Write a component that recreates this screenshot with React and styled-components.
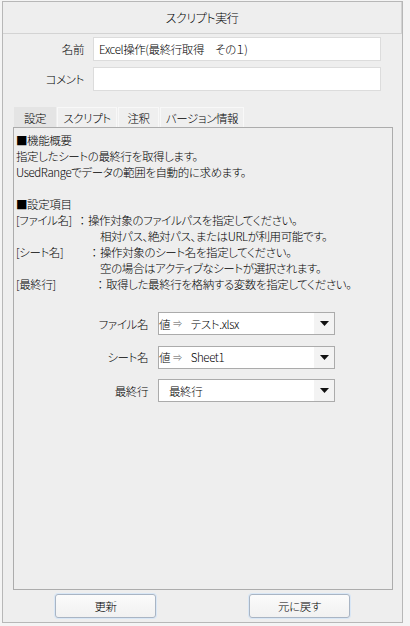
import React from "react";
import styled, { createGlobalStyle } from "styled-components";

const GlobalStyle = createGlobalStyle`
  html, body { margin: 0; padding: 0; background: #f4f4f4; }
  body {
    font-family: "Noto Sans CJK JP", "Noto Sans", sans-serif;
    font-size: 11.5px;
    letter-spacing: -0.4px;
    font-weight: 300;
    color: #000000;
    font-feature-settings: "palt";
  }
  * { box-sizing: border-box; }
`;

const Window = styled.div`
  margin: 1px 0 0 2px;
  width: 401px;
  height: 622px;
  border: 1px solid #b7b7b7;
  background: #eeeeee;
  display: flex;
  flex-direction: column;
`;

const TitleBar = styled.div`
  height: 32px;
  border-right: 1px solid #d3d3d3;
  border-bottom: 1px solid #d3d3d3;
  display: flex;
  align-items: center;
  justify-content: center;
  font-size: 12px;
`;

const Form = styled.div`
  display: flex;
  flex-direction: column;
  gap: 6px;
  padding-top: 3px;
`;

const FieldRow = styled.div`
  display: grid;
  grid-template-columns: 81px 288px;
  column-gap: 9px;
  align-items: center;
`;

const FieldLabel = styled.div`
  text-align: right;
`;

const TextBox = styled.div`
  height: 24px;
  border: 1px solid #dcdcdc;
  background: #ffffff;
  padding: 0 5px;
  display: flex;
  align-items: center;
  white-space: pre;
`;

const TabStrip = styled.div`
  display: flex;
  margin: 16px 0 0 11px;
  height: 20px;
  gap: 1px;
`;

const Tab = styled.div`
  height: 20px;
  width: ${(p) => p.$w}px;
  display: flex;
  align-items: center;
  justify-content: center;
  background: ${(p) => (p.$active ? "#e4e4e4" : "#efefef")};
  border: 1px solid ${(p) => (p.$active ? "#e4e4e4" : "#f8f8f8")};
  border-bottom: none;
`;

const Panel = styled.div`
  margin-left: 10px;
  width: 380px;
  height: 463px;
  border: 1px solid #acacac;
  background: #eeeeee;
  padding: 4px 0 0 2px;
  display: flex;
  flex-direction: column;
`;

const Text = styled.div`
  line-height: 16px;
  height: 16px;
  white-space: pre;
`;

const Line = styled.div`
  height: 16px;
  line-height: 16px;
  display: flex;
  padding-left: ${(p) => p.$indent || 0}px;
  white-space: pre;
`;

const Key = styled.span`
  display: inline-block;
  width: ${(p) => p.$w}px;
`;

const Colon = styled.span`
  display: inline-block;
  width: 12px;
  text-align: center;
`;

const SelectGrid = styled.div`
  display: grid;
  grid-template-columns: 100px 177px;
  column-gap: 10px;
  row-gap: 10.5px;
  align-items: center;
  margin: 20px 0 0 32px;
`;

const SelectLabel = styled.div`
  text-align: right;
`;

const Select = styled.div`
  height: 23px;
  border: 1px solid #ababab;
  background: #ffffff;
  display: flex;
  align-items: stretch;
`;

const SelectValue = styled.div`
  flex: 1;
  display: flex;
  align-items: center;
  padding-left: ${(p) => p.$pad}px;
  white-space: pre;
`;

const ValArrow = styled.span`
  font-size: 9px;
  color: #555;
  margin: 0 9px 0 3px;
`;

const ArrowBox = styled.div`
  width: 20px;
  background: #f3f3f3;
  display: flex;
  align-items: center;
  justify-content: center;
`;

const Footer = styled.div`
  display: flex;
  gap: 93px;
  padding: 4px 0 0 52px;
`;

const Button = styled.button`
  width: 101px;
  height: 24px;
  border: 1px solid #a9b5c4;
  border-radius: 3px;
  background: linear-gradient(#fbfbfb, #f1f1f1);
  box-shadow: 0 0 0 1px #d9e7f6;
  font-family: inherit;
  font-size: 11.5px;
  font-weight: 300;
  letter-spacing: -0.4px;
  font-feature-settings: "palt";
  color: #000000;
  padding: 0;
`;

const Caret = () => (
  <svg width="9" height="5" viewBox="0 0 9 5">
    <path d="M0 0 H9 L4.5 5 Z" fill="#111" />
  </svg>
);

const Dropdown = ({ tag, value, pad }) => (
  <Select>
    <SelectValue $pad={pad}>
      {tag && (
        <>
          <span>{tag}</span>
          <ValArrow>⇒</ValArrow>
        </>
      )}
      <span>{value}</span>
    </SelectValue>
    <ArrowBox>
      <Caret />
    </ArrowBox>
  </Select>
);

export default function App() {
  return (
    <>
      <GlobalStyle />
      <Window>
        <TitleBar>スクリプト実行</TitleBar>
        <Form>
          <FieldRow>
            <FieldLabel>名前</FieldLabel>
            <TextBox>Excel操作(最終行取得　その１)</TextBox>
          </FieldRow>
          <FieldRow>
            <FieldLabel>コメント</FieldLabel>
            <TextBox />
          </FieldRow>
        </Form>
        <TabStrip>
          <Tab $active $w={42}>設定</Tab>
          <Tab $w={60}>スクリプト</Tab>
          <Tab $w={41}>注釈</Tab>
          <Tab $w={84}>バージョン情報</Tab>
        </TabStrip>
        <Panel>
          <Text>■機能概要</Text>
          <Text>指定したシートの最終行を取得します。</Text>
          <Text>UsedRangeでデータの範囲を自動的に求めます。</Text>
          <Text> </Text>
          <Text>■設定項目</Text>
          <Line>
            <Key $w={60}>[ファイル名]</Key>
            <Colon>：</Colon>操作対象のファイルパスを指定してください。
          </Line>
          <Line $indent={84}>相対パス、絶対パス、またはURLが利用可能です。</Line>
          <Line>
            <Key $w={72}>[シート名]</Key>
            <Colon>：</Colon>操作対象のシート名を指定してください。
          </Line>
          <Line $indent={84}>空の場合はアクティブなシートが選択されます。</Line>
          <Line>
            <Key $w={78}>[最終行]</Key>
            <Colon>：</Colon>取得した最終行を格納する変数を指定してください。
          </Line>
          <SelectGrid>
            <SelectLabel>ファイル名</SelectLabel>
            <Dropdown tag="値" value="テスト.xlsx" pad={0} />
            <SelectLabel>シート名</SelectLabel>
            <Dropdown tag="値" value="Sheet1" pad={0} />
            <SelectLabel>最終行</SelectLabel>
            <Dropdown value="最終行" pad={10} />
          </SelectGrid>
        </Panel>
        <Footer>
          <Button>更新</Button>
          <Button>元に戻す</Button>
        </Footer>
      </Window>
    </>
  );
}
